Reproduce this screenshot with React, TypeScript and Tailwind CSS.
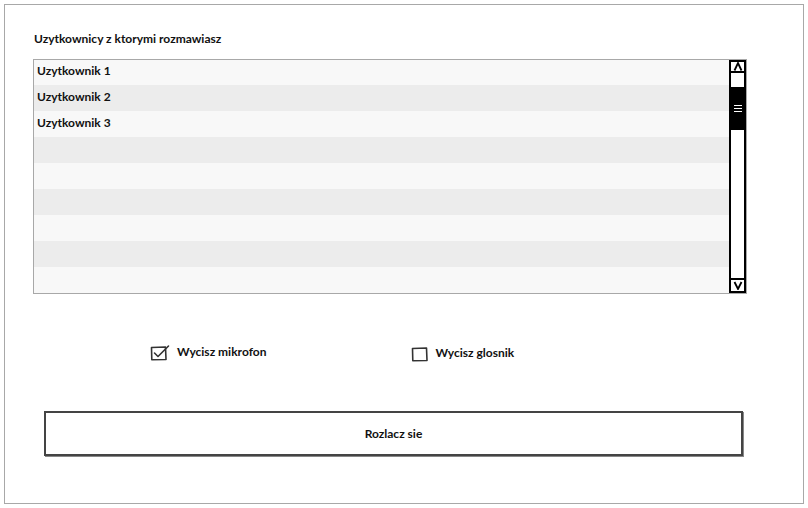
import React from "react";

const font = { fontFamily: "Lato, 'Noto Sans', sans-serif" };

function CheckBox({ checked }: { checked: boolean }) {
  return (
    <svg width="20" height="18" viewBox="0 0 20 18" className="shrink-0">
      <path d="M1.5 4.5 L15.5 4 L16 16.5 L1.8 16.8 Z" fill="none" stroke="#333" strokeWidth="1.6" strokeLinejoin="round" />
      {checked && (
        <path d="M4.5 10 L8 13.5 L18.5 3" fill="none" stroke="#333" strokeWidth="1.6" strokeLinecap="round" strokeLinejoin="round" />
      )}
    </svg>
  );
}

function Scrollbar() {
  return (
    <div className="w-[17px] h-full border-2 border-black bg-white flex flex-col">
      <div className="h-[11px] border-b-2 border-black flex items-center justify-center">
        <svg width="10" height="9" viewBox="0 0 10 9">
          <path d="M1.5 8.5 L5 1 L8.5 8.5" fill="none" stroke="black" strokeWidth="1.8" />
        </svg>
      </div>
      <div className="h-[14px]" />
      <div className="h-[43px] bg-black flex flex-col items-center justify-center gap-[2px]">
        <div className="w-[8px] h-[1px] bg-white" />
        <div className="w-[8px] h-[1px] bg-white" />
        <div className="w-[8px] h-[1px] bg-white" />
      </div>
      <div className="flex-1" />
      <div className="h-[13px] border-t-2 border-black flex items-center justify-center">
        <svg width="10" height="9" viewBox="0 0 10 9">
          <path d="M1.5 1 L5 8 L8.5 1" fill="none" stroke="black" strokeWidth="1.8" />
        </svg>
      </div>
    </div>
  );
}

export default function App() {
  const rows = ["Uzytkownik 1", "Uzytkownik 2", "Uzytkownik 3", "", "", "", "", "", ""];
  return (
    <div className="w-[808px] h-[508px] bg-white p-[4px]" style={font}>
      <div className="w-[800px] h-[500px] border border-[#a8a8a8] bg-white flex flex-col">
        <div className="ml-[29px] mt-[25px] h-[17px] leading-[17px] text-[12px] font-bold text-[#111]">
          Uzytkownicy z ktorymi rozmawiasz
        </div>
        <div className="ml-[28px] mt-[12px] w-[714px] h-[235px] border border-[#a8a8a8] flex">
          <div className="flex-1 overflow-hidden flex flex-col">
            {rows.map((r, i) => (
              <div
                key={i}
                className={`shrink-0 ${i === 0 ? "h-[25px]" : "h-[26px]"} ${i % 2 === 0 ? "bg-[#f8f8f8]" : "bg-[#ececec]"} pl-[3px] pb-[3px] flex items-center text-[12px] font-bold text-[#111]`}
              >
                {r}
              </div>
            ))}
          </div>
          <Scrollbar />
        </div>
        <div className="mt-[48px] flex items-center h-[20px]">
          <div className="ml-[145px] flex items-center">
            <CheckBox checked />
            <span className="ml-[7px] text-[12px] font-bold text-[#111]">Wycisz mikrofon</span>
          </div>
          <div className="ml-[145px] flex items-center mt-[2px]">
            <CheckBox checked={false} />
            <span className="ml-[4px] text-[12px] font-bold text-[#111]">Wycisz glosnik</span>
          </div>
        </div>
        <div className="ml-[39px] mt-[49px] w-[699px] h-[45px] border-2 border-[#444] shadow-[1px_1px_0_#888] flex items-center justify-center text-[12px] font-bold text-[#111]">
          Rozlacz sie
        </div>
      </div>
    </div>
  );
}
